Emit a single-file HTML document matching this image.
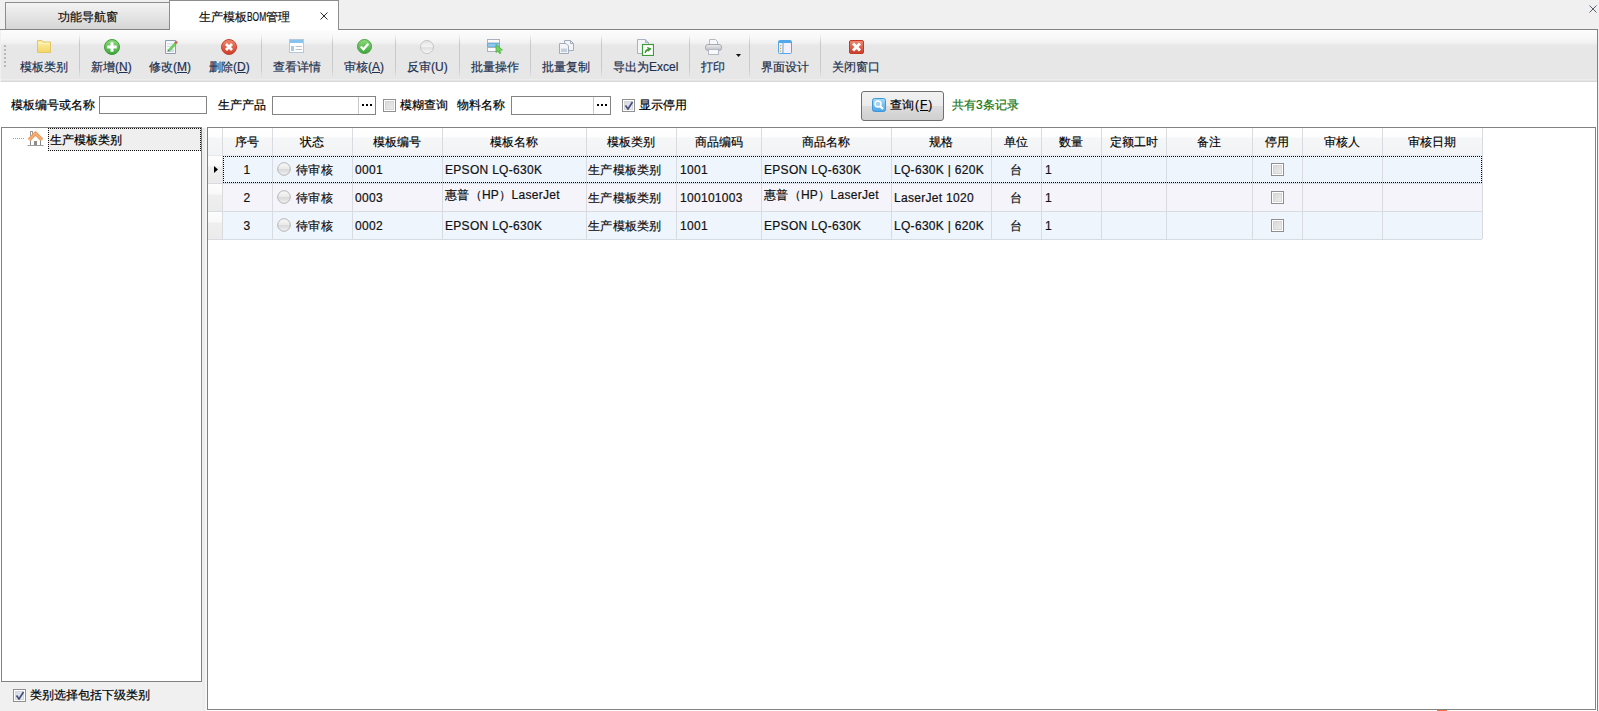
<!DOCTYPE html>
<html><head><meta charset="utf-8">
<style>
*{box-sizing:border-box}
html{-webkit-text-stroke:0.2px currentColor}
html,body{margin:0;padding:0}
body{width:1599px;height:711px;overflow:hidden;position:relative;background:#f0f0f0;font-family:"Liberation Sans",sans-serif;font-size:12px;color:#000}
.a{position:absolute}
.t{position:absolute;white-space:nowrap;line-height:14px;-webkit-text-stroke:0.2px currentColor}
#tab1{left:5px;top:2px;width:165px;height:27px;border:1px solid #8d8d8d;border-bottom:none;background:linear-gradient(#f4f4f4,#e6e6e6 45%,#d6d6d6)}
#tab2{left:169px;top:0;width:170px;height:30px;border:1px solid #8d8d8d;border-bottom:none;background:#fff}
#tbar{left:1px;top:30px;width:1596px;height:52px;background:linear-gradient(#fcfcfc 0,#f8f8f8 8px,#f1f1f1 13px,#e9e9e9 15px,#e7e7e7 16px,#e7e7e7 49px,#f2f2f2 50px,#d8d8d8 51px)}
.sep{position:absolute;top:34px;width:1px;height:44px;background:linear-gradient(rgba(200,200,200,0),#c9c9c9 20%,#c9c9c9 80%,rgba(200,200,200,0))}
.tb{position:absolute;top:59px;color:#1e3150;white-space:nowrap;line-height:16px;-webkit-text-stroke:0.2px currentColor}
.tb u{text-decoration:underline;text-underline-offset:1px}
.inp{position:absolute;background:#fff;border:1px solid #838383}
.cb{position:absolute;width:13px;height:13px;border:1px solid #8f8f8f;background:#fff;box-shadow:inset 0 0 0 1px #fff,inset 0 0 0 2px #d6d6d6;background-image:linear-gradient(135deg,#d2d2d2,#f2f2f2)}
.cb i{position:absolute;left:1px;top:1px;right:1px;bottom:1px;border:1px solid #d9d9d9;}
#grid{left:207px;top:127px;width:1389px;height:583px;border:1px solid #828282;background:#fff}
.gh{position:absolute;top:128px;height:28px;background:linear-gradient(#ffffff 0,#fdfdfd 9px,#f5f6f7 10px,#f2f3f5 27px,#e6e8eb 27px)}
.gv{position:absolute;width:1px;background:#d8dbe0}
.ind{background:linear-gradient(#fdfdfd 0,#f9f9f9 10px,#efeff0 11px,#ebebec 27px)}
.row{position:absolute;left:222px;width:1261px;height:28px}
.cell{position:absolute;white-space:nowrap;line-height:14px;color:#111;letter-spacing:0.3px}
.hd{letter-spacing:0;-webkit-text-stroke:0.15px currentColor;color:#000}
</style></head><body>
<!-- tabs -->
<div class="a" style="left:0;top:29px;width:1598px;height:1px;background:#828282"></div>
<div id="tab1" class="a"></div>
<div class="t" style="left:58px;top:10px;color:#111">功能导航窗</div>
<div id="tab2" class="a"></div>
<div class="t" style="left:199px;top:10px;color:#111">生产模板<span style="display:inline-block;width:19px;overflow:visible"><span style="display:inline-block;transform:scaleX(.7);transform-origin:0 0">BOM</span></span>管理</div>
<svg class="a" style="left:320px;top:12px" width="8" height="8"><path d="M0.5 0.5L7.5 7.5M7.5 0.5L0.5 7.5" stroke="#2a2a2a" stroke-width="1"/></svg>
<svg class="a" style="left:1589px;top:5px" width="8" height="8"><path d="M0.5 0.5L7.5 7.5M7.5 0.5L0.5 7.5" stroke="#56606c" stroke-width="1"/></svg>
<div class="a" style="left:1597px;top:29px;width:1px;height:682px;background:#828282"></div>
<!-- content bg -->
<div class="a" style="left:0;top:82px;width:1597px;height:629px;background:#fff"></div>
<div class="a" style="left:0;top:681px;width:207px;height:30px;background:#f0f0f0"></div>
<!-- toolbar -->
<div id="tbar" class="a"></div>
<div class="a" style="left:4px;top:45px;width:2px;height:22px;background:repeating-linear-gradient(#b8b8b8 0,#b8b8b8 2px,transparent 2px,transparent 4px)"></div>
<div class="sep" style="left:79px"></div>
<div class="sep" style="left:261px"></div>
<div class="sep" style="left:332px"></div>
<div class="sep" style="left:395px"></div>
<div class="sep" style="left:459px"></div>
<div class="sep" style="left:530px"></div>
<div class="sep" style="left:601px"></div>
<div class="sep" style="left:689px"></div>
<div class="sep" style="left:749px"></div>
<div class="sep" style="left:820px"></div>

<div class="tb" style="left:20px">模板类别</div>
<div class="tb" style="left:91px">新增(<u>N</u>)</div>
<div class="tb" style="left:149px">修改(<u>M</u>)</div>
<div class="tb" style="left:209px">删除(<u>D</u>)</div>
<div class="tb" style="left:273px">查看详情</div>
<div class="tb" style="left:344px">审核(<u>A</u>)</div>
<div class="tb" style="left:407px">反审(U)</div>
<div class="tb" style="left:471px">批量操作</div>
<div class="tb" style="left:542px">批量复制</div>
<div class="tb" style="left:613px">导出为Excel</div>
<div class="tb" style="left:701px">打印</div>
<div class="tb" style="left:761px">界面设计</div>
<div class="tb" style="left:832px">关闭窗口</div>
<svg class="a" style="left:736px;top:54px" width="6" height="4"><path d="M0 0H5L2.5 3Z" fill="#111"/></svg>

<!-- icons -->
<svg class="a" style="left:0;top:0" width="0" height="0"><defs>
<linearGradient id="gf" x1="0" y1="0" x2="0" y2="1"><stop offset="0" stop-color="#fdf0a8"/><stop offset="1" stop-color="#f3d567"/></linearGradient>
<linearGradient id="gg" x1="0" y1="0" x2="0" y2="1"><stop offset="0" stop-color="#8fdc7c"/><stop offset="1" stop-color="#3aa53a"/></linearGradient>
<linearGradient id="gr" x1="0" y1="0" x2="0" y2="1"><stop offset="0" stop-color="#f08a70"/><stop offset="1" stop-color="#cc3a28"/></linearGradient>
<linearGradient id="gw" x1="0" y1="0" x2="0" y2="1"><stop offset="0" stop-color="#e4e4e4"/><stop offset="0.5" stop-color="#f4f4f4"/><stop offset="0.55" stop-color="#dedede"/><stop offset="1" stop-color="#fbfbfb"/></linearGradient>
<linearGradient id="gp" x1="0" y1="0" x2="0" y2="1"><stop offset="0" stop-color="#eeeeee"/><stop offset="1" stop-color="#b8bcc2"/></linearGradient>
<linearGradient id="gb" x1="0" y1="0" x2="0" y2="1"><stop offset="0" stop-color="#a8dcfa"/><stop offset="1" stop-color="#4aa4e8"/></linearGradient>
</defs></svg>
<svg class="a" style="left:37px;top:40px" width="14" height="13"><path d="M0.5 0.5H5L6 2H13.5V12.5H0.5Z" fill="url(#gf)" stroke="#e2c666"/><path d="M1 3.5H13" stroke="#fff8c8" stroke-width="0.8"/></svg>
<svg class="a" style="left:104px;top:39px" width="16" height="16"><circle cx="8" cy="8" r="7.5" fill="url(#gg)" stroke="#3c9c38"/><path d="M8 3.3V12.7M3.3 8H12.7" stroke="#fff" stroke-width="3"/></svg>
<svg class="a" style="left:165px;top:40px" width="14" height="14"><path d="M0.5 0.5H10.5V13.5H0.5Z" fill="#f6f9fd" stroke="#8e9cb4"/><path d="M2 4H8M2 6.5H6" stroke="#c8d4e4" stroke-width="0.8"/><rect x="2" y="9" width="7" height="3" fill="#cfdcec"/><path d="M3.5 11L10.5 3.5" stroke="#6ed05a" stroke-width="2.6"/><path d="M10 3.5L12 1.5" stroke="#c86a60" stroke-width="2.6"/><path d="M3 11.5L3.8 10.2" stroke="#555" stroke-width="1"/></svg>
<svg class="a" style="left:221px;top:39px" width="16" height="16"><circle cx="8" cy="8" r="7.5" fill="url(#gr)" stroke="#c8402e"/><path d="M5 5L11 11M11 5L5 11" stroke="#fff" stroke-width="2.8"/></svg>
<svg class="a" style="left:289px;top:39px" width="15" height="14"><rect x="0.5" y="0.5" width="14" height="13" fill="#fff" stroke="#b4c8dc"/><rect x="1" y="1" width="13" height="3" fill="#86c3ef"/><rect x="2" y="7" width="3" height="5" fill="#a9c8e6"/><path d="M6.5 7.5H13M6.5 10.5H13" stroke="#bcc2ca"/></svg>
<svg class="a" style="left:357px;top:39px" width="15" height="15"><circle cx="7.5" cy="7.5" r="7" fill="url(#gg)" stroke="#4a9e44"/><path d="M3.8 7.5L6.5 10.3L11.3 4.8" stroke="#fff" stroke-width="2.3" fill="none"/></svg>
<svg class="a" style="left:420px;top:40px" width="14" height="14"><circle cx="7" cy="7" r="6.5" fill="url(#gw)" stroke="#c4c4c4"/></svg>
<svg class="a" style="left:487px;top:39px" width="17" height="15"><rect x="0.5" y="0.5" width="12" height="3.5" fill="#fbfbfb" stroke="#a9b1bb"/><rect x="0.5" y="4.5" width="12" height="3.5" fill="#8ccaf2" stroke="#6aaee0"/><rect x="0.5" y="8.5" width="12" height="4" fill="#fbfbfb" stroke="#a9b1bb"/><path d="M9 5.5L15.5 11L12.5 11.3L14 14L12.5 14.5L11 12L9 13.5Z" fill="#72d460" stroke="#46a83a" stroke-width="0.7"/></svg>
<svg class="a" style="left:559px;top:40px" width="15" height="14"><path d="M5.5 0.5H11.5L14.5 3.5V10.5H5.5Z" fill="#f2f4f8" stroke="#a2acba"/><path d="M11.5 0.5V3.5H14.5" fill="none" stroke="#a2acba"/><path d="M0.5 3.5H7L9.5 6V13.5H0.5Z" fill="#f2f4f8" stroke="#a2acba"/><rect x="2" y="8.5" width="6" height="3.5" fill="#c4cfdd"/></svg>
<svg class="a" style="left:637px;top:39px" width="17" height="17"><path d="M0.5 0.5H8.5L11.5 3.5V14.5H0.5Z" fill="#f3f5f9" stroke="#a8b2c0"/><path d="M8.5 0.5V3.5H11.5" fill="#c8d4e8" stroke="#a8b2c0"/><rect x="5.5" y="5.5" width="11" height="11" fill="#fff" stroke="#3f9a3a" stroke-width="1.2"/><path d="M8 14Q8 10.5 11.5 10L10.5 8.5L14 9.8L11.2 12.2L11.5 11.3Q9.5 11.6 8 14Z" fill="#3a9a2a" stroke="#3a9a2a" stroke-width="0.9"/></svg>
<svg class="a" style="left:705px;top:39px" width="17" height="16"><path d="M4.5 0.5H10.5L12.5 2.5V6.5H4.5Z" fill="#f6f8fb" stroke="#b4bac4"/><rect x="0.5" y="5.5" width="16" height="6" rx="2.5" fill="url(#gp)" stroke="#a4aab2"/><rect x="3.5" y="10.5" width="10" height="5" fill="#f8f9fb" stroke="#b4bac4"/></svg>
<svg class="a" style="left:778px;top:40px" width="14" height="14"><rect x="0.5" y="0.5" width="13" height="13" rx="1" fill="#f4f0fc" stroke="#52a8e8"/><rect x="1" y="1" width="12" height="2" fill="#52a8e8"/><path d="M5 3V13" stroke="#52a8e8"/><path d="M2.5 5V6.2M2.5 7.8V9M2.5 10.6V11.8" stroke="#f0a030" stroke-width="1.4"/></svg>
<svg class="a" style="left:849px;top:40px" width="15" height="14"><rect x="0.5" y="0.5" width="14" height="13" rx="1.5" fill="url(#gr)" stroke="#c23a26"/><path d="M4 3.5L11 10.5M11 3.5L4 10.5" stroke="#fff" stroke-width="3"/></svg>

<!-- filter row -->
<div class="t" style="left:11px;top:98px">模板编号或名称</div>
<div class="inp" style="left:99px;top:96px;width:108px;height:18px"></div>
<div class="t" style="left:218px;top:98px">生产产品</div>
<div class="inp" style="left:272px;top:96px;width:104px;height:19px"></div>
<div class="a" style="left:358px;top:97px;width:1px;height:17px;background:#c8c8c8"></div>
<div class="a" style="left:362px;top:104px;width:10px;height:2px;background:repeating-linear-gradient(90deg,#000 0,#000 2px,transparent 2px,transparent 4px)"></div>
<div class="cb" style="left:383px;top:99px"></div>
<div class="t" style="left:400px;top:98px">模糊查询</div>
<div class="t" style="left:457px;top:98px">物料名称</div>
<div class="inp" style="left:511px;top:96px;width:100px;height:19px"></div>
<div class="a" style="left:593px;top:97px;width:1px;height:17px;background:#c8c8c8"></div>
<div class="a" style="left:597px;top:104px;width:10px;height:2px;background:repeating-linear-gradient(90deg,#000 0,#000 2px,transparent 2px,transparent 4px)"></div>
<div class="cb" style="left:622px;top:99px;background-image:linear-gradient(135deg,#cfd5e4,#eef1f8)"></div>
<svg class="a" style="left:624px;top:101px" width="10" height="10"><path d="M1.5 4.5L4 8L8.5 1" stroke="#474d7e" stroke-width="1.7" fill="none"/></svg>
<div class="t" style="left:639px;top:98px">显示停用</div>
<div class="a" style="left:861px;top:91px;width:83px;height:30px;border:1px solid #707070;border-radius:3px;background:linear-gradient(#f2f2f2,#ebebeb 50%,#dddddd 51%,#cfcfcf)"></div>
<svg class="a" style="left:872px;top:98px" width="14" height="14"><rect x="0.5" y="0.5" width="13" height="13" rx="2" fill="url(#gb)" stroke="#3d98d8"/><circle cx="6" cy="6" r="3" fill="#9fd4f4" stroke="#fff" stroke-width="1.4"/><path d="M8.2 8.2L11 11" stroke="#fff" stroke-width="2.2"/></svg>
<div class="t" style="left:890px;top:98px">查询<span style="letter-spacing:1px;margin-left:1px">(<u>F</u>)</span></div>
<div class="t" style="left:952px;top:98px;color:#137513">共有3条记录</div>

<!-- tree -->
<div class="a" style="left:202px;top:128px;width:5px;height:583px;background:linear-gradient(90deg,#ededed 0,#ececec 3px,#f6f6f6 3px,#f4f4f4 5px)"></div>
<div class="a" style="left:1px;top:127px;width:201px;height:555px;border:1px solid #828282;background:#fff"></div>
<div class="a" style="left:13px;top:138px;width:11px;height:1px;background:repeating-linear-gradient(90deg,#a0a0a0 0,#a0a0a0 1px,transparent 1px,transparent 2px)"></div>
<svg class="a" style="left:27px;top:130px" width="17" height="17"><path d="M3.5 8V15.5H13.5V8" fill="#fff" stroke="#8c8c8c"/><rect x="7" y="11" width="3" height="4.5" fill="#8c8c8c"/><rect x="3.5" y="1.5" width="2" height="4" fill="#fff" stroke="#9a9a9a"/><path d="M2 10L8.5 3.2L15 10" stroke="#ec9a5c" stroke-width="3.6" fill="none" stroke-linejoin="round"/><path d="M2 10L8.5 3.2L15 10" stroke="#fbd0a4" stroke-width="1.2" fill="none" stroke-dasharray="1 1"/><path d="M0.5 15.5H16.5" stroke="#9c9c9c"/></svg>
<div class="a" style="left:48px;top:128px;width:153px;height:23px;background:#efefef;border:1px dotted #111"></div>
<div class="t" style="left:50px;top:133px">生产模板类别</div>
<div class="cb" style="left:13px;top:689px;background-image:linear-gradient(135deg,#cfd5e4,#eef1f8)"></div>
<svg class="a" style="left:15px;top:691px" width="10" height="10"><path d="M1.5 4.5L4 8L8.5 1" stroke="#474d7e" stroke-width="1.7" fill="none"/></svg>
<div class="t" style="left:30px;top:688px">类别选择包括下级类别</div>

<!-- grid -->
<div id="grid" class="a"></div>
<div class="a" style="left:1437px;top:710px;width:10px;height:1px;background:#ea7444"></div>
<div id="gridc"><div class="gh" style="left:208px;width:14px"></div>
<div class="gh" style="left:223px;width:49px"></div>
<div class="cell hd" style="left:222px;width:50px;top:135px;text-align:center">序号</div>
<div class="gh" style="left:273px;width:79px"></div>
<div class="cell hd" style="left:272px;width:80px;top:135px;text-align:center">状态</div>
<div class="gh" style="left:353px;width:89px"></div>
<div class="cell hd" style="left:352px;width:90px;top:135px;text-align:center">模板编号</div>
<div class="gh" style="left:443px;width:143px"></div>
<div class="cell hd" style="left:442px;width:144px;top:135px;text-align:center">模板名称</div>
<div class="gh" style="left:587px;width:89px"></div>
<div class="cell hd" style="left:586px;width:90px;top:135px;text-align:center">模板类别</div>
<div class="gh" style="left:677px;width:84px"></div>
<div class="cell hd" style="left:676px;width:85px;top:135px;text-align:center">商品编码</div>
<div class="gh" style="left:762px;width:129px"></div>
<div class="cell hd" style="left:761px;width:130px;top:135px;text-align:center">商品名称</div>
<div class="gh" style="left:892px;width:99px"></div>
<div class="cell hd" style="left:891px;width:100px;top:135px;text-align:center">规格</div>
<div class="gh" style="left:992px;width:49px"></div>
<div class="cell hd" style="left:991px;width:50px;top:135px;text-align:center">单位</div>
<div class="gh" style="left:1042px;width:59px"></div>
<div class="cell hd" style="left:1041px;width:60px;top:135px;text-align:center">数量</div>
<div class="gh" style="left:1102px;width:64px"></div>
<div class="cell hd" style="left:1101px;width:65px;top:135px;text-align:center">定额工时</div>
<div class="gh" style="left:1167px;width:85px"></div>
<div class="cell hd" style="left:1166px;width:86px;top:135px;text-align:center">备注</div>
<div class="gh" style="left:1253px;width:49px"></div>
<div class="cell hd" style="left:1252px;width:50px;top:135px;text-align:center">停用</div>
<div class="gh" style="left:1303px;width:79px"></div>
<div class="cell hd" style="left:1302px;width:80px;top:135px;text-align:center">审核人</div>
<div class="gh" style="left:1383px;width:99px"></div>
<div class="cell hd" style="left:1382px;width:100px;top:135px;text-align:center">审核日期</div>
<div class="a ind" style="left:208px;top:156px;width:14px;height:27px"></div>
<div class="a" style="left:222px;top:156px;width:1260px;height:27px;background:#eef5fd"></div>
<div class="a ind" style="left:208px;top:184px;width:14px;height:27px"></div>
<div class="a" style="left:222px;top:184px;width:1260px;height:27px;background:#f5f4fb"></div>
<div class="a ind" style="left:208px;top:212px;width:14px;height:27px"></div>
<div class="a" style="left:222px;top:212px;width:1260px;height:27px;background:#eef5fd"></div>
<div class="a" style="left:208px;top:183px;width:1274px;height:1px;background:#d8dbe0"></div>
<div class="a" style="left:208px;top:211px;width:1274px;height:1px;background:#d8dbe0"></div>
<div class="a" style="left:208px;top:239px;width:1274px;height:1px;background:#d8dbe0"></div>
<div class="a" style="left:222px;top:128px;width:1px;height:111px;background:#d8dbe0"></div>
<div class="a" style="left:272px;top:128px;width:1px;height:111px;background:#d8dbe0"></div>
<div class="a" style="left:352px;top:128px;width:1px;height:111px;background:#d8dbe0"></div>
<div class="a" style="left:442px;top:128px;width:1px;height:111px;background:#d8dbe0"></div>
<div class="a" style="left:586px;top:128px;width:1px;height:111px;background:#d8dbe0"></div>
<div class="a" style="left:676px;top:128px;width:1px;height:111px;background:#d8dbe0"></div>
<div class="a" style="left:761px;top:128px;width:1px;height:111px;background:#d8dbe0"></div>
<div class="a" style="left:891px;top:128px;width:1px;height:111px;background:#d8dbe0"></div>
<div class="a" style="left:991px;top:128px;width:1px;height:111px;background:#d8dbe0"></div>
<div class="a" style="left:1041px;top:128px;width:1px;height:111px;background:#d8dbe0"></div>
<div class="a" style="left:1101px;top:128px;width:1px;height:111px;background:#d8dbe0"></div>
<div class="a" style="left:1166px;top:128px;width:1px;height:111px;background:#d8dbe0"></div>
<div class="a" style="left:1252px;top:128px;width:1px;height:111px;background:#d8dbe0"></div>
<div class="a" style="left:1302px;top:128px;width:1px;height:111px;background:#d8dbe0"></div>
<div class="a" style="left:1382px;top:128px;width:1px;height:111px;background:#d8dbe0"></div>
<div class="a" style="left:1482px;top:128px;width:1px;height:111px;background:#d8dbe0"></div>
<div class="a" style="left:223px;top:156px;width:1259px;height:27px;border:1px dotted #000"></div>
<svg class="a" style="left:214px;top:166px" width="5" height="8"><path d="M0 0L4 3.5L0 7Z" fill="#000"/></svg>
<div class="cell" style="left:222px;width:50px;top:163px;text-align:center">1</div>
<svg class="a" style="left:277px;top:162px" width="14" height="14"><defs><linearGradient id="rg0" x1="0" y1="0" x2="0" y2="1"><stop offset="0" stop-color="#fafafa"/><stop offset="0.5" stop-color="#e8e8e8"/><stop offset="0.55" stop-color="#d8d8d8"/><stop offset="1" stop-color="#f4f4f4"/></linearGradient></defs><circle cx="7" cy="7" r="6.3" fill="url(#rg0)" stroke="#b4b4b4"/></svg>
<div class="cell" style="left:296px;top:163px">待审核</div>
<div class="cell" style="left:355px;top:163px">0001</div>
<div class="cell" style="left:445px;top:163px">EPSON LQ-630K</div>
<div class="cell" style="left:588px;top:163px">生产模板类别</div>
<div class="cell" style="left:680px;top:163px">1001</div>
<div class="cell" style="left:764px;top:163px">EPSON LQ-630K</div>
<div class="cell" style="left:894px;top:163px">LQ-630K | 620K</div>
<div class="cell" style="left:991px;width:50px;top:163px;text-align:center">台</div>
<div class="cell" style="left:1045px;top:163px">1</div>
<div class="cb" style="left:1271px;top:163px"></div>
<div class="cell" style="left:222px;width:50px;top:191px;text-align:center">2</div>
<svg class="a" style="left:277px;top:190px" width="14" height="14"><defs><linearGradient id="rg1" x1="0" y1="0" x2="0" y2="1"><stop offset="0" stop-color="#fafafa"/><stop offset="0.5" stop-color="#e8e8e8"/><stop offset="0.55" stop-color="#d8d8d8"/><stop offset="1" stop-color="#f4f4f4"/></linearGradient></defs><circle cx="7" cy="7" r="6.3" fill="url(#rg1)" stroke="#b4b4b4"/></svg>
<div class="cell" style="left:296px;top:191px">待审核</div>
<div class="cell" style="left:355px;top:191px">0003</div>
<div class="cell" style="left:445px;top:188px">惠普（HP）LaserJet</div>
<div class="cell" style="left:588px;top:191px">生产模板类别</div>
<div class="cell" style="left:680px;top:191px">100101003</div>
<div class="cell" style="left:764px;top:188px">惠普（HP）LaserJet</div>
<div class="cell" style="left:894px;top:191px">LaserJet 1020</div>
<div class="cell" style="left:991px;width:50px;top:191px;text-align:center">台</div>
<div class="cell" style="left:1045px;top:191px">1</div>
<div class="cb" style="left:1271px;top:191px"></div>
<div class="cell" style="left:222px;width:50px;top:219px;text-align:center">3</div>
<svg class="a" style="left:277px;top:218px" width="14" height="14"><defs><linearGradient id="rg2" x1="0" y1="0" x2="0" y2="1"><stop offset="0" stop-color="#fafafa"/><stop offset="0.5" stop-color="#e8e8e8"/><stop offset="0.55" stop-color="#d8d8d8"/><stop offset="1" stop-color="#f4f4f4"/></linearGradient></defs><circle cx="7" cy="7" r="6.3" fill="url(#rg2)" stroke="#b4b4b4"/></svg>
<div class="cell" style="left:296px;top:219px">待审核</div>
<div class="cell" style="left:355px;top:219px">0002</div>
<div class="cell" style="left:445px;top:219px">EPSON LQ-630K</div>
<div class="cell" style="left:588px;top:219px">生产模板类别</div>
<div class="cell" style="left:680px;top:219px">1001</div>
<div class="cell" style="left:764px;top:219px">EPSON LQ-630K</div>
<div class="cell" style="left:894px;top:219px">LQ-630K | 620K</div>
<div class="cell" style="left:991px;width:50px;top:219px;text-align:center">台</div>
<div class="cell" style="left:1045px;top:219px">1</div>
<div class="cb" style="left:1271px;top:219px"></div></div><!--gridend-->
</body></html>
